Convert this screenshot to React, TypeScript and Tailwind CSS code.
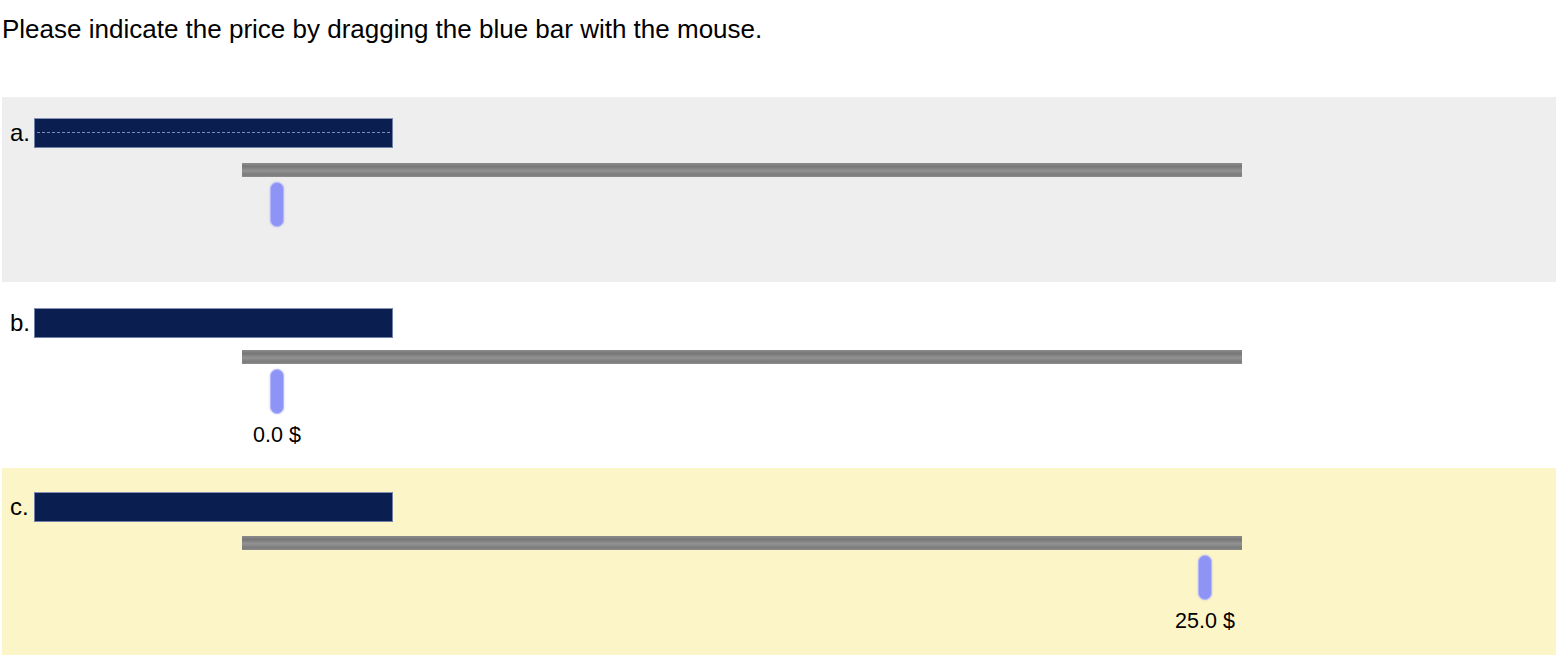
import React from 'react';

type Item = {
  key: string;
  bg: string;
  pad: string;
  gap: string;
  height: string;
  thumbLeft: number;
  value?: string;
  focused?: boolean;
};

// rows of the price question, thumb offset is from the left of the track
const items: Item[] = [
  { key: 'a', bg: 'bg-[#eeeeee]', pad: 'pt-[21px]', gap: 'gap-[15px]', height: 'h-[185px]', thumbLeft: 28, focused: true },
  { key: 'b', bg: 'bg-white', pad: 'pt-[26px]', gap: 'gap-[12px]', height: 'h-[186px]', thumbLeft: 28, value: '0.0 $' },
  { key: 'c', bg: 'bg-[#fcf5c8]', pad: 'pt-[24px]', gap: 'gap-[14px]', height: 'h-[187px]', thumbLeft: 956, value: '25.0 $' },
];

function Slider({ item }: { item: Item }) {
  return (
    <div className="ml-[240px] w-[1000px] flex flex-col gap-[5px]">
      <div className="h-[14px] w-full bg-[linear-gradient(to_bottom,#8c8c8c,#777777_25%,#929292_55%,#7b7b7b_85%,#8e8e8e)]" />
      <div className="relative h-[80px]">
        {/* thumb + value move together along the track */}
        <div
          className="absolute top-0 w-[14px] flex flex-col items-center gap-[9px]"
          style={{ left: item.thumbLeft }}
        >
          <div className="w-[14px] h-[45px] rounded-[7px] bg-[#8e94f5] border border-[#b3b7fa] shadow-[0_0_2px_rgba(140,146,246,0.5)]" />
          {item.value && (
            <div className="text-[21.5px] leading-[25px] text-black whitespace-nowrap">{item.value}</div>
          )}
        </div>
      </div>
    </div>
  );
}

function Row({ item }: { item: Item }) {
  return (
    <div className={`${item.bg} ${item.pad} ${item.height} ml-[2px] flex flex-col ${item.gap}`}>
      <div className="flex items-center h-[30px]">
        <span className="w-[32px] pl-[8px] text-[24px] leading-[30px] text-black">{item.key}.</span>
        <div className="relative w-[359px] h-[30px] bg-[#0b1e50] border border-[#6f7fa6] border-t-[#8793b5]">
          {item.focused && (
            <div className="absolute left-[2px] right-[2px] top-[13px] border-t border-dashed border-[#7f8fb8]" />
          )}
        </div>
      </div>
      <Slider item={item} />
    </div>
  );
}

export default function App() {
  return (
    <div className="w-[1556px] h-[656px] bg-white overflow-hidden font-['Liberation_Sans',Arial,sans-serif]">
      <div className="h-[97px] pt-[13px] pl-[2px]">
        <p className="text-[26px] leading-[32px] text-black">
          Please indicate the price by dragging the blue bar with the mouse.
        </p>
      </div>
      {items.map((item) => (
        <Row key={item.key} item={item} />
      ))}
    </div>
  );
}
